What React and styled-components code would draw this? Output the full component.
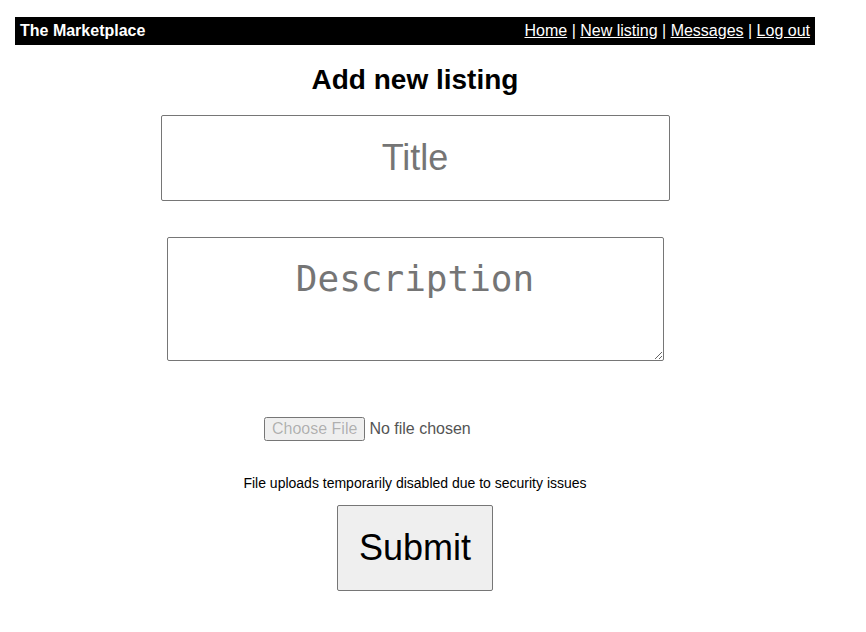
import React from 'react';
import styled, { createGlobalStyle } from 'styled-components';

const GlobalStyle = createGlobalStyle`
    body {
        margin: 0;
        padding: 17px 15px;
        font-family: "Liberation Sans", Arial, sans-serif;
        background: #fff;
    }
`;

const Page = styled.div`
    width: 800px;
`;

const Nav = styled.nav`
    height: 28px;
    background: #000;
    color: #fff;
    display: flex;
    align-items: center;
    justify-content: space-between;
    padding: 0 5px;
    font-size: 16px;
`;

const Brand = styled.span`
    font-weight: bold;
`;

const NavLinks = styled.div`
    white-space: pre;
`;

const NavLink = styled.a`
    color: #fff;
    text-decoration: underline;
`;

const Form = styled.form`
    display: flex;
    flex-direction: column;
    align-items: center;
`;

const Heading = styled.h2`
    font-size: 28px;
    font-weight: bold;
    margin: 18px 0 0;
    line-height: 34px;
`;

const TitleInput = styled.input`
    box-sizing: border-box;
    width: 509px;
    height: 86px;
    margin-top: 18px;
    border: 1px solid #767676;
    border-radius: 2px;
    font-family: "Liberation Sans", Arial, sans-serif;
    font-size: 36px;
    text-align: center;
    &::placeholder { color: #757575; }
`;

const DescriptionInput = styled.textarea`
    box-sizing: border-box;
    width: 497px;
    height: 124px;
    margin-top: 36px;
    padding: 20px 2px 2px;
    border: 1px solid #767676;
    border-radius: 2px;
    font-family: "DejaVu Sans Mono", monospace;
    font-size: 36px;
    text-align: center;
    &::placeholder { color: #757575; }
`;

const FileInput = styled.input`
    width: 302px;
    margin-top: 56px;
    font-family: "Liberation Sans", Arial, sans-serif;
    font-size: 16px;
`;

const Notice = styled.p`
    font-size: 14px;
    margin: 34px 0 0;
    line-height: 16px;
`;

const SubmitButton = styled.button`
    box-sizing: border-box;
    width: 156px;
    height: 86px;
    margin-top: 14px;
    font-family: "Liberation Sans", Arial, sans-serif;
    font-size: 36px;
    color: #000;
    background: #efefef;
    border: 1px solid #767676;
    border-radius: 2px;
`;

export default function App() {
    return (
        <Page>
            <GlobalStyle />
            <Nav>
                <Brand>The Marketplace</Brand>
                <NavLinks>
                    <NavLink href="#">Home</NavLink>{' | '}
                    <NavLink href="#">New listing</NavLink>{' | '}
                    <NavLink href="#">Messages</NavLink>{' | '}
                    <NavLink href="#">Log out</NavLink>
                </NavLinks>
            </Nav>
            <Form onSubmit={e => e.preventDefault()}>
                <Heading>Add new listing</Heading>
                <TitleInput placeholder="Title" />
                <DescriptionInput placeholder="Description" />
                <FileInput type="file" disabled />
                <Notice>File uploads temporarily disabled due to security issues</Notice>
                <SubmitButton type="submit">Submit</SubmitButton>
            </Form>
        </Page>
    );
}
